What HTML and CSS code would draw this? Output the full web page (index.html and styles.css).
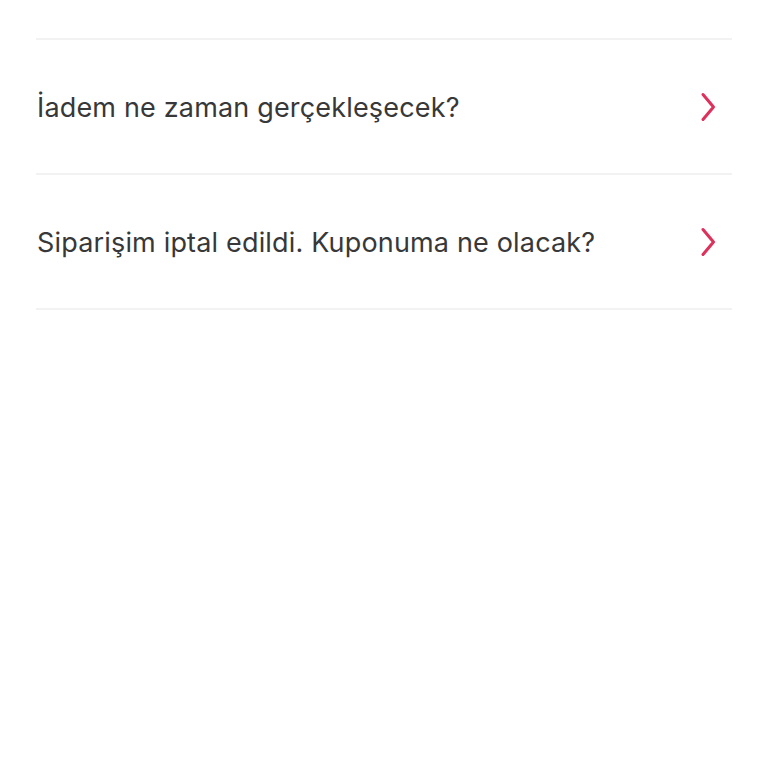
FILE: index.html
```html
<!DOCTYPE html>
<html lang="tr">
<head>
<meta charset="utf-8">
<link rel="stylesheet" href="styles.css">
</head>
<body>
<div class="list">
  <div class="row">
    <span class="label">İadem ne zaman gerçekleşecek?</span>
    <svg class="chev" viewBox="0 0 20 30" width="20" height="30"><path d="M5 2.5 L15.5 15 L5 27.5" fill="none" stroke="#df2f5b" stroke-width="3" stroke-linecap="round" stroke-linejoin="round"/></svg>
  </div>
  <div class="row">
    <span class="label">Siparişim iptal edildi. Kuponuma ne olacak?</span>
    <svg class="chev" viewBox="0 0 20 30" width="20" height="30"><path d="M5 2.5 L15.5 15 L5 27.5" fill="none" stroke="#df2f5b" stroke-width="3" stroke-linecap="round" stroke-linejoin="round"/></svg>
  </div>
</div>
</body>
</html>
```
FILE: styles.css
```css
html, body {
  margin: 0;
  padding: 0;
  background: #ffffff;
}
.list {
  margin: 38px 36px 0 36px;
  border-top: 2px solid #f2f2f2;
}
.row {
  display: flex;
  align-items: center;
  justify-content: space-between;
  height: 133px;
  border-bottom: 2px solid #f2f2f2;
  padding: 0 14px 0 1px;
}
.label {
  font-family: "Inter", "Liberation Sans", Arial, sans-serif;
  font-size: 27px;
  letter-spacing: 0.17px;
  color: #383838;
  position: relative;
  top: 1px;
}
.chev {
  display: block;
}
```
